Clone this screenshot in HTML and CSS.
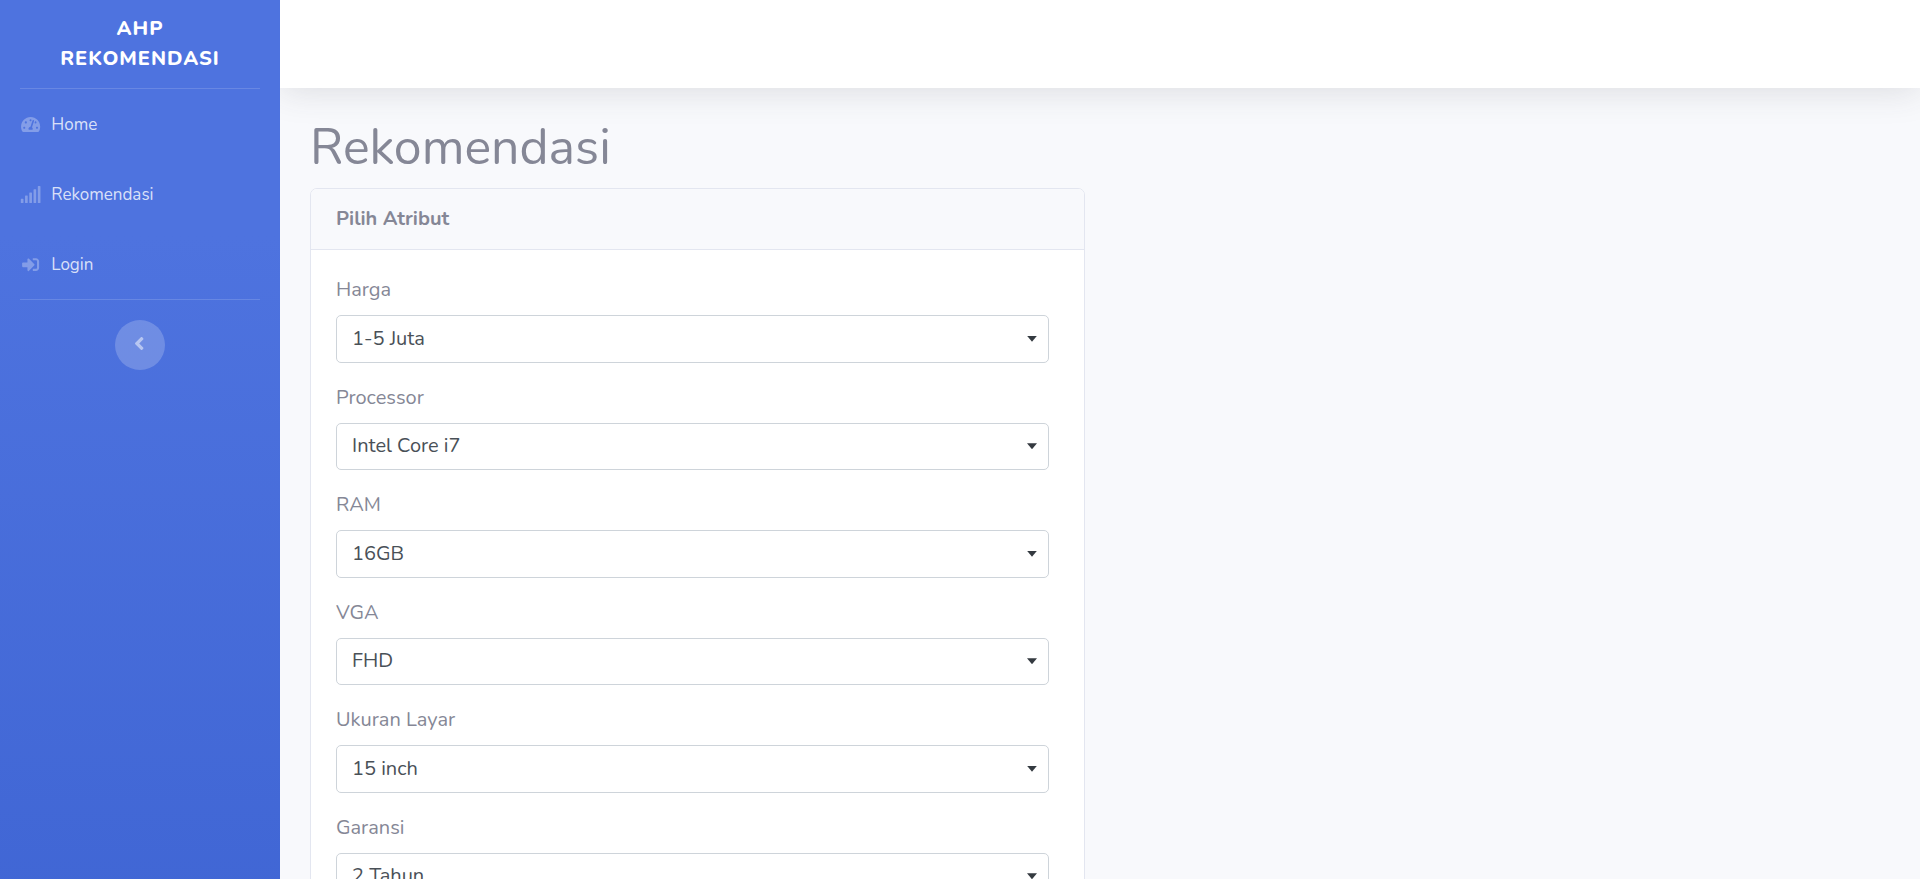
FILE: index.html
```html
<!DOCTYPE html>
<html lang="id">
<head>
<meta charset="utf-8">
<title>AHP Rekomendasi</title>
<link rel="stylesheet" href="styles.css">
</head>
<body>
<div class="wrapper">
  <nav class="sidebar">
    <a class="brand"><span>AHP</span><span>Rekomendasi</span></a>
    <hr class="divider">
    <ul class="nav">
      <li><a class="nav-link"><svg class="icon" viewBox="0 0 576 512"><path d="M288 32C128.940 32 0 160.940 0 320c0 52.800 14.250 102.260 39.060 144.800 5.610 9.620 16.300 15.200 27.440 15.200h443c11.140 0 21.830-5.580 27.440-15.200C561.750 422.260 576 372.800 576 320c0-159.060-128.940-288-288-288zm0 64c14.710 0 26.580 10.130 30.320 23.650-1.110 2.260-2.640 4.230-3.450 6.670l-9.220 27.670c-5.130 3.490-10.970 6.010-17.640 6.010-17.670 0-32-14.330-32-32S270.330 96 288 96zM96 384c-17.670 0-32-14.330-32-32s14.330-32 32-32 32 14.330 32 32-14.330 32-32 32zm48-160c-17.670 0-32-14.330-32-32s14.330-32 32-32 32 14.330 32 32-14.330 32-32 32zm246.770-72.410l-61.330 184C343.130 347.330 352 364.540 352 384c0 11.720-3.380 22.550-8.880 32H232.880c-5.500-9.450-8.880-20.280-8.880-32 0-33.940 26.500-61.430 59.900-63.590l61.340-184.010c4.170-12.560 17.730-19.450 30.360-15.170 12.570 4.190 19.350 17.790 15.170 30.360zm14.660 57.200l15.520-46.550c3.470-1.290 7.130-2.230 11.050-2.230 17.670 0 32 14.330 32 32s-14.330 32-32 32c-11.380-.010-20.890-6.280-26.570-15.220zM480 384c-17.670 0-32-14.330-32-32s14.330-32 32-32 32 14.330 32 32-14.330 32-32 32z"/></svg><span class="link-text">Home</span></a></li>
      <li><a class="nav-link"><svg class="icon" viewBox="0 0 640 512"><path d="M216 288h-48c-8.840 0-16 7.160-16 16v192c0 8.840 7.160 16 16 16h48c8.840 0 16-7.160 16-16V304c0-8.840-7.160-16-16-16zM88 384H40c-8.840 0-16 7.160-16 16v96c0 8.840 7.160 16 16 16h48c8.840 0 16-7.160 16-16v-96c0-8.840-7.160-16-16-16zm256-192h-48c-8.840 0-16 7.160-16 16v288c0 8.840 7.160 16 16 16h48c8.840 0 16-7.160 16-16V208c0-8.840-7.160-16-16-16zm128-96h-48c-8.840 0-16 7.160-16 16v384c0 8.840 7.160 16 16 16h48c8.840 0 16-7.160 16-16V112c0-8.840-7.160-16-16-16zM600 0h-48c-8.840 0-16 7.160-16 16v480c0 8.840 7.160 16 16 16h48c8.840 0 16-7.160 16-16V16c0-8.840-7.160-16-16-16z"/></svg><span class="link-text">Rekomendasi</span></a></li>
      <li><a class="nav-link"><svg class="icon" viewBox="0 0 512 512"><path d="M416 448h-84c-6.600 0-12-5.400-12-12v-40c0-6.600 5.400-12 12-12h84c17.700 0 32-14.300 32-32V160c0-17.700-14.300-32-32-32h-84c-6.600 0-12-5.400-12-12V76c0-6.600 5.400-12 12-12h84c53 0 96 43 96 96v192c0 53-43 96-96 96zm-47-201L201 79c-15-15-41-4.500-41 17v96H24c-13.300 0-24 10.700-24 24v96c0 13.300 10.700 24 24 24h136v96c0 21.500 26 32 41 17l168-168c9.300-9.400 9.300-24.600 0-34z"/></svg><span class="link-text">Login</span></a></li>
    </ul>
    <hr class="divider">
    <button class="toggle" aria-label="Toggle sidebar"><svg class="chevron" viewBox="0 0 256 512"><path d="M31.700 239l136-136c9.400-9.400 24.600-9.400 33.900 0l22.600 22.600c9.400 9.400 9.400 24.600 0 33.900L127.900 256l96.400 96.400c9.400 9.400 9.400 24.600 0 33.900L201.700 409c-9.400 9.400-24.600 9.400-33.900 0l-136-136c-9.500-9.400-9.500-24.600-.1-34z"/></svg></button>
  </nav>
  <div class="content">
    <header class="topbar"></header>
    <main class="page">
      <h1 class="title">Rekomendasi</h1>
      <section class="card">
        <div class="card-header">Pilih Atribut</div>
        <form class="card-body">
          <div class="group"><label class="label">Harga</label><div class="select">1-5 Juta</div></div>
          <div class="group"><label class="label">Processor</label><div class="select">Intel Core i7</div></div>
          <div class="group"><label class="label">RAM</label><div class="select">16GB</div></div>
          <div class="group"><label class="label">VGA</label><div class="select">FHD</div></div>
          <div class="group"><label class="label">Ukuran Layar</label><div class="select">15 inch</div></div>
          <div class="group"><label class="label">Garansi</label><div class="select">2 Tahun</div></div>
        </form>
      </section>
    </main>
  </div>
</div>
</body>
</html>
```
FILE: styles.css
```css
* { box-sizing: border-box; }
body {
  margin: 0;
  font: 400 20px/1.5 Nunito, Lato, "Open Sans", sans-serif;
  color: #858796;
  background: #f8f9fc;
}
.wrapper { display: flex; height: 879px; overflow: hidden; }
.sidebar {
  position: relative;
  z-index: 1;
  width: 280px;
  flex: none;
  display: flex;
  flex-direction: column;
  background: linear-gradient(180deg, #4e73df 10%, #224abe 100%) 0 0 / 100% 2350px;
}
.brand {
  height: 88px;
  flex: none;
  display: flex;
  flex-direction: column;
  align-items: center;
  justify-content: center;
  font-weight: 800;
  letter-spacing: 1px;
  text-transform: uppercase;
  color: #fff;
}
.divider {
  width: 240px;
  margin: 0 20px;
  border: 0;
  border-top: 1px solid rgba(255, 255, 255, .15);
}
.nav { margin: 0; padding: 0; list-style: none; }
.nav-link {
  display: flex;
  align-items: center;
  gap: 10px;
  height: 70px;
  padding: 0 20px;
  font-size: 17px;
  color: rgba(255, 255, 255, .8);
}
.link-text { padding-top: 2px; }
.icon { width: 21.25px; height: 17px; fill: rgba(255, 255, 255, .3); }
.toggle {
  display: flex;
  align-items: center;
  justify-content: center;
  width: 50px;
  height: 50px;
  margin: 20px auto 0;
  padding: 0 2px 3px 0;
  border: 0;
  border-radius: 50%;
  background: rgba(255, 255, 255, .2);
}
.chevron { width: 10.5px; height: 21px; fill: rgba(255, 255, 255, .5); }
.content { flex: 1; }
.topbar {
  height: 88px;
  background: #fff;
  box-shadow: 0 3px 35px rgba(58, 59, 69, .15);
}
.page { padding: 30px 30px 0; }
.title {
  margin: 0 0 10px;
  font-size: 50px;
  font-weight: 400;
  line-height: 60px;
}
.card {
  width: 775px;
  border: 1px solid #e3e6f0;
  border-radius: 7px;
  background: #fff;
}
.card-header {
  padding: 15px 25px;
  border-bottom: 1px solid #e3e6f0;
  border-radius: 6px 6px 0 0;
  background: #f8f9fc;
  font-weight: 700;
}
.card-body { padding: 25px 35px 25px 25px; }
.group { margin-bottom: 20px; }
.label { display: block; margin-bottom: 10px; }
.select {
  display: flex;
  align-items: center;
  justify-content: space-between;
  height: 47.5px;
  padding: 0 11px 0 15px;
  border: 1px solid #ced4da;
  border-radius: 5px;
  color: #495057;
}
/* dropdown caret */
.select::after {
  content: "";
  width: 10px;
  height: 6px;
  background: #343a40;
  clip-path: polygon(0 0, 100% 0, 50% 100%);
}
```
